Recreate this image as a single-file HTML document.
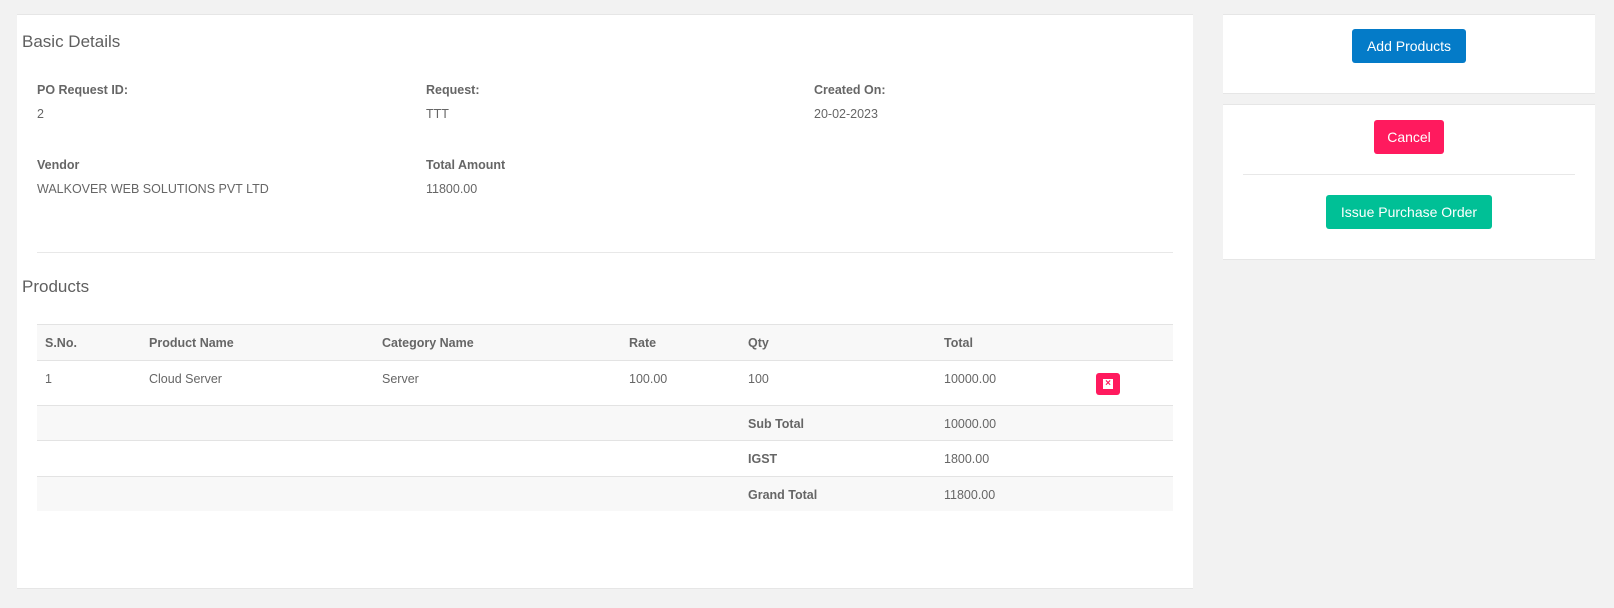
<!DOCTYPE html>
<html><head><style>
*{margin:0;padding:0;box-sizing:border-box}
body{width:1614px;height:608px;background:#f2f2f2;font-family:"Liberation Sans",sans-serif;color:#666;font-size:12.5px;position:relative;overflow:hidden}
.abs{position:absolute;white-space:nowrap}
.card{position:absolute;background:#fff;border-top:1px solid #e6e6e6;border-bottom:1px solid #e6e6e6}
.b{font-weight:bold}
h2{font-weight:normal;font-size:17px;color:#5f5f5f}
.row{position:absolute;left:37px;width:1136px}
.btn{position:absolute;color:#fff;font-size:14px;border-radius:3px;display:flex;align-items:center;justify-content:center}
</style></head><body>
<div class="card" style="left:17px;top:14px;width:1176px;height:575px"></div>
<h2 class="abs" style="left:22px;top:32px">Basic Details</h2>
<div class="abs b" style="left:37px;top:83px">PO Request ID:</div>
<div class="abs" style="left:37px;top:107px">2</div>
<div class="abs b" style="left:426px;top:83px">Request:</div>
<div class="abs" style="left:426px;top:107px">TTT</div>
<div class="abs b" style="left:814px;top:83px">Created On:</div>
<div class="abs" style="left:814px;top:107px">20-02-2023</div>
<div class="abs b" style="left:37px;top:158px">Vendor</div>
<div class="abs" style="left:37px;top:182px">WALKOVER WEB SOLUTIONS PVT LTD</div>
<div class="abs b" style="left:426px;top:158px">Total Amount</div>
<div class="abs" style="left:426px;top:182px">11800.00</div>
<div class="abs" style="left:37px;top:252px;width:1136px;height:1px;background:#e8e8e8"></div>
<h2 class="abs" style="left:22px;top:277px">Products</h2>
<div class="row" style="top:324px;height:37px;background:#f8f8f8;border-top:1px solid #e3e3e3;border-bottom:1px solid #e3e3e3"></div>
<div class="row" style="top:405px;height:36px;background:#f8f8f8;border-top:1px solid #e3e3e3;border-bottom:1px solid #e3e3e3"></div>
<div class="row" style="top:476px;height:35px;background:#f8f8f8;border-top:1px solid #e3e3e3"></div>
<div class="abs b" style="left:45px;top:336px">S.No.</div>
<div class="abs b" style="left:149px;top:336px">Product Name</div>
<div class="abs b" style="left:382px;top:336px">Category Name</div>
<div class="abs b" style="left:629px;top:336px">Rate</div>
<div class="abs b" style="left:748px;top:336px">Qty</div>
<div class="abs b" style="left:944px;top:336px">Total</div>
<div class="abs" style="left:45px;top:372px">1</div>
<div class="abs" style="left:149px;top:372px">Cloud Server</div>
<div class="abs" style="left:382px;top:372px">Server</div>
<div class="abs" style="left:629px;top:372px">100.00</div>
<div class="abs" style="left:748px;top:372px">100</div>
<div class="abs" style="left:944px;top:372px">10000.00</div>
<div class="abs" style="left:1096px;top:373px;width:24px;height:22px;background:#ff1a5e;border-radius:3px"><div style="position:absolute;left:7px;top:6px;width:10px;height:10px;background:#fff;color:#ff1a5e;font-size:10px;line-height:10px;text-align:center;font-weight:bold">×</div></div>
<div class="abs b" style="left:748px;top:417px">Sub Total</div>
<div class="abs" style="left:944px;top:417px">10000.00</div>
<div class="abs b" style="left:748px;top:452px">IGST</div>
<div class="abs" style="left:944px;top:452px">1800.00</div>
<div class="abs b" style="left:748px;top:488px">Grand Total</div>
<div class="abs" style="left:944px;top:488px">11800.00</div>

<div class="card" style="left:1223px;top:14px;width:372px;height:80px"></div>
<div class="btn" style="left:1352px;top:29px;width:114px;height:34px;background:#047bc8">Add Products</div>
<div class="card" style="left:1223px;top:104px;width:372px;height:156px"></div>
<div class="btn" style="left:1374px;top:120px;width:70px;height:34px;background:#ff1a5e">Cancel</div>
<div class="abs" style="left:1243px;top:174px;width:332px;height:1px;background:#e8e8e8"></div>
<div class="btn" style="left:1326px;top:195px;width:166px;height:34px;background:#00c096">Issue Purchase Order</div>
</body></html>
